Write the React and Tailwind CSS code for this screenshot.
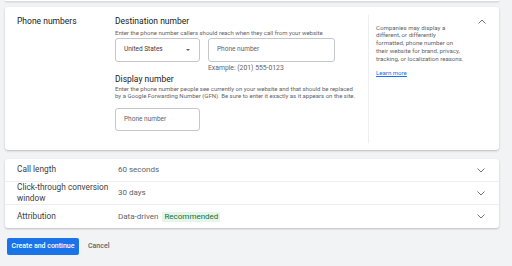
import React from "react";

function Chevron({ up }) {
  return (
    <svg width="8" height="5" viewBox="0 0 8 5" className="shrink-0">
      <polyline
        points={up ? "0.5,4.5 4,1 7.5,4.5" : "0.5,0.5 4,4 7.5,0.5"}
        fill="none"
        stroke="#5f6368"
        strokeWidth="0.9"
      />
    </svg>
  );
}

function Row({ label, children, last }) {
  return (
    <div
      className={
        "flex items-center h-[23px] pl-[12px] pr-[14px] " +
        (last ? "" : "border-b border-[#eceef0]")
      }
    >
      <div className="w-[101px] text-[8.3px] leading-[11.5px] text-[#3c4043]">
        {label}
      </div>
      <div className="flex-1 flex items-center text-[8px] text-[#5f6368]">
        {children}
      </div>
      <Chevron />
    </div>
  );
}

export default function App() {
  return (
    <div
      className="w-[512px] h-[266px] bg-[#f1f3f4] overflow-hidden"
      style={{ fontFamily: "Roboto, 'Liberation Sans', sans-serif" }}
    >
      {/* previous card edge */}
      <div className="ml-[5px] w-[494px] h-[1px] bg-white shadow-[0_1px_2px_rgba(60,64,67,0.3)]" />

      {/* PHONE NUMBERS CARD */}
      <div className="ml-[5px] mt-[6px] w-[494px] h-[143px] bg-white rounded-[3px] shadow-[0_1px_2px_rgba(60,64,67,0.3)] flex pl-[12px] pt-[8px]">
        <div className="w-[98px] text-[8.5px] leading-[12px] text-[#202124]">
          Phone numbers
        </div>

        <div className="w-[253px] flex flex-col">
          <div className="text-[8.5px] leading-[12px] text-[#202124]">
            Destination number
          </div>
          <div className="mt-[2px] text-[6px] leading-[7px] text-[#5f6368] whitespace-nowrap">
            Enter the phone number callers should reach when they call from your website
          </div>
          <div className="mt-[2px] flex gap-[8px]">
            <div className="w-[85px] h-[24px] border border-[#c4c7ca] rounded-[3px] flex items-center justify-between pl-[8px] pr-[9px] text-[6.5px] text-[#3c4043]">
              <span>United States</span>
              <span className="w-0 h-0 border-l-[2px] border-r-[2px] border-t-[2.5px] border-l-transparent border-r-transparent border-t-[#5f6368]" />
            </div>
            <div className="w-[127px] h-[24px] border border-[#c4c7ca] rounded-[3px] flex items-center pl-[8px] text-[6.5px] text-[#5f6368]">
              Phone number
            </div>
          </div>
          <div className="ml-[93px] mt-[2px] text-[6.8px] leading-[8px] text-[#5f6368]">
            Example: (201) 555-0123
          </div>
          <div className="mt-[1px] text-[8.5px] leading-[12px] text-[#202124]">
            Display number
          </div>
          <div className="mt-[1px] text-[6px] leading-[6.5px] text-[#5f6368] whitespace-nowrap">
            Enter the phone number people see currently on your website and that should be replaced
            <br />
            by a Google Forwarding Number (GFN). Be sure to enter it exactly as it appears on the site.
          </div>
          <div className="mt-[9px] w-[85px] h-[23px] border border-[#c4c7ca] rounded-[3px] flex items-center pl-[8px] text-[6.5px] text-[#5f6368]">
            Phone number
          </div>
        </div>

        <div className="w-[110px] mb-[7px] border-l border-[#eceef0] pl-[7px] pt-[8.5px] flex flex-col">
          <div className="text-[6.1px] leading-[7.8px] text-[#5f6368] whitespace-nowrap">
            Companies may display a
            <br />
            different, or differently
            <br />
            formatted, phone number on
            <br />
            their website for brand, privacy,
            <br />
            tracking, or localization reasons.
          </div>
          <div className="mt-[6.5px] text-[6.1px] leading-[7px] text-[#1a73e8] underline">
            Learn more
          </div>
        </div>

        <div className="flex-1 flex justify-start pt-[4px]">
          <Chevron up />
        </div>
      </div>

      {/* SETTINGS ROWS */}
      <div className="ml-[5px] mt-[9px] w-[494px] bg-white rounded-[3px] shadow-[0_1px_2px_rgba(60,64,67,0.3)]">
        <Row label="Call length">60 seconds</Row>
        <Row label="Click-through conversion window">30 days</Row>
        <Row label="Attribution" last>
          <span>Data-driven</span>
          <span className="ml-[4px] px-[2px] h-[10px] flex items-center bg-[#e6f4ea] text-[#137333] rounded-[1px]">
            Recommended
          </span>
        </Row>
      </div>

      {/* ACTIONS */}
      <div className="ml-[7px] mt-[10px] flex items-center">
        <button className="h-[17px] w-[72px] bg-[#1a73e8] text-white text-[7px] font-medium rounded-[2px] flex items-center justify-center">
          Create and continue
        </button>
        <button className="ml-[9px] text-[7px] font-medium text-[#5f6368]">
          Cancel
        </button>
      </div>
    </div>
  );
}
